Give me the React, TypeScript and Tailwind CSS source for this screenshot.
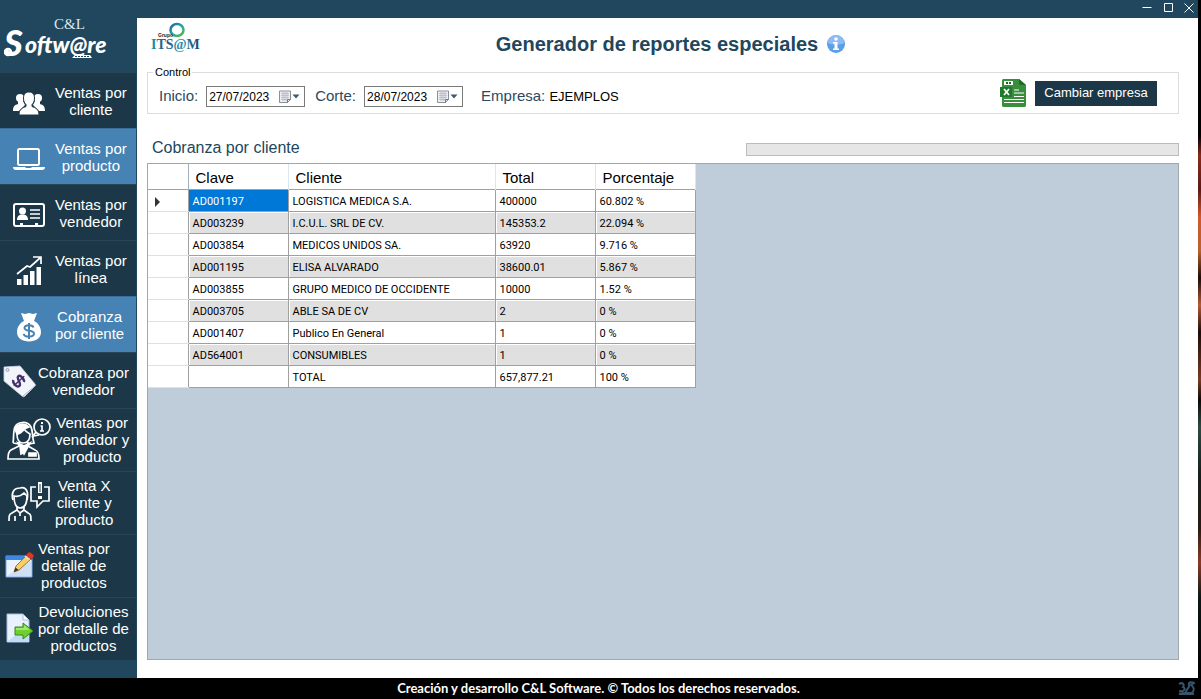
import type { ReactNode } from 'react'

// ---------- sidebar icons ----------

function UsersIcon() {
  return (
    <svg width="32" height="26" viewBox="0 0 32 26" fill="white" aria-hidden="true">
      <circle cx="7" cy="8" r="4" />
      <circle cx="25" cy="8" r="4" />
      <path d="M0 21c0-5 2-6 5-7v-3h5l2 4-6 6zM32 21c0-5-2-6-5-7v-3h-5l-2 4 6 6z" />
      <path
        d="M16 2c3.500 0 5.500 2.500 5.500 6s-1 5-2.500 6.500v2c3.500 1.500 7 2.500 7 8.500H6c0-6 3.500-7 7-8.500v-2C11.500 13 10.500 11.500 10.500 8S12.500 2 16 2z"
        stroke="#1c3848"
        strokeWidth="1"
      />
    </svg>
  )
}

function LaptopIcon() {
  return (
    <svg width="32" height="24" viewBox="0 0 32 24" fill="none" aria-hidden="true">
      <rect x="5" y="2" width="21" height="16" rx="1.500" stroke="white" strokeWidth="2" />
      <path d="M0 20h12l1 1h5l1-1h13c0 2-1 3-3 3H3c-2 0-3-1-3-3z" fill="white" />
    </svg>
  )
}

function IdCardIcon() {
  return (
    <svg width="32" height="26" viewBox="0 0 32 26" fill="none" aria-hidden="true">
      <rect x="1" y="2" width="30" height="22" rx="2" stroke="white" strokeWidth="2" />
      <circle cx="9.500" cy="9" r="3.500" fill="white" />
      <path d="M4 18c0-4 2-5 4-5.500h3c2 .5 4 1.500 4 5.500z" fill="white" />
      <path d="M17 8h10M17 12h10M17 16h10" stroke="white" strokeWidth="1.500" />
      <path d="M7 24v-3h3v3M22 24v-3h3v3" fill="white" />
    </svg>
  )
}

function GrowthIcon() {
  return (
    <svg width="26" height="30" viewBox="0 0 26 30" fill="none" aria-hidden="true">
      <path d="M1 23h4.500v6H1zM7.500 19H12v10H7.500zM14 15h4.500v14H14zM20.500 11H25v18h-4.500z" fill="white" />
      <path d="M1 18L11 10l3 1L24 2M17 1h8v7" stroke="white" strokeWidth="1.700" />
    </svg>
  )
}

function MoneyBagIcon() {
  return (
    <svg width="26" height="30" viewBox="0 0 26 30" fill="white" aria-hidden="true">
      <path d="M5 1l4 1 4-1 4 1 4-1-3 8C22 11 25 15 25 20c0 6-5 9.500-12 9.500S1 26 1 20C1 15 4 11 8 9z" />
      <path
        d="M17.500 15.500c-.5-1.500-2-2.200-4.500-2.200-3 0-4.500 1.200-4.500 2.800 0 4 9.500 1.500 9.500 5.500 0 1.800-2 3-5 3s-5-1-5.300-2.800M13 11v16"
        fill="none"
        stroke="#4682b4"
        strokeWidth="2"
      />
    </svg>
  )
}

function PriceTagIcon() {
  return (
    <svg width="34" height="34" viewBox="0 0 34 34" fill="none" aria-hidden="true">
      <path d="M1 3l16-1 15 18c1 1 0 2-1 3l-9 9c-1 1-2 1-3 0L1 17z" fill="#f4f5fb" stroke="#ccd3e6" strokeWidth=".8" />
      <path d="M20 32l12-10" stroke="#aab4d0" />
      <circle cx="4.500" cy="6" r="1.500" fill="#e2e6f0" stroke="#9aa3ba" />
      <g transform="rotate(48 16 17)" stroke="#43306d">
        <path d="M20 14c-1-2-8-2.500-8 .5S20 16.500 20 20s-7.500 3-8.500.5" strokeWidth="2.400" />
        <path d="M16 10v14" strokeWidth="1.500" />
      </g>
    </svg>
  )
}

function AdvisorIcon() {
  return (
    <svg width="44" height="44" viewBox="0 0 44 44" fill="none" stroke="white" strokeWidth="1.700" aria-hidden="true">
      <circle cx="35" cy="10" r="8" />
      <path d="M29 15l-3 4 6-1" />
      <path d="M33.500 9H35v5M33 14h4" />
      <path d="M35 5v2" strokeWidth="2" />
      <path d="M6 26c1-5 0-12 2-16C10 5 20 3 24 10c2 4 1 10 3 16l-5 1M6 26l6 1" />
      <path d="M10 17c2 0 6-2 7-5 2 3 4 4 6 5 0 6-3 9-7 9s-6-4-6-9zM12 25v4l-8 4c-2 1-3 3-3 9h31c0-6-1-8-4-9l-7-4v-4" />
      <path d="M8 12c2-5 9-7 14-2l-5 2-7 5z" fill="white" />
      <path d="M11 26l6 11 6-11-6 3zM13 29l1 8 4-2" fill="white" />
      <path d="M22 36h7v3h-7z" fill="white" />
    </svg>
  )
}

function CustomerIcon() {
  return (
    <svg width="44" height="44" viewBox="0 0 44 44" fill="none" stroke="white" strokeWidth="1.700" aria-hidden="true">
      <path d="M6 20c-2-6 0-12 7-12 6-2 9 4 7 12" />
      <path d="M7 16c4 1 8-1 10-3l3 3c0 8-3 12-7 12s-6-5-6-12zM10 26v4l-5 3c-3 1-3 3-3 8M17 26v4l4 3c3 1 3 3 3 8" />
      <path d="M10 30l3 3 4-3M13 33v3M8 36v5M18 36v5" />
      <path d="M29 7h-5v14h6v6l6-6h6V7h-5" />
      <path d="M33 2v11M33 16v3" strokeWidth="4" />
      <path d="M33 4v8" stroke="#1c3848" strokeWidth="1" />
    </svg>
  )
}

function EditWindowIcon() {
  return (
    <svg width="30" height="30" viewBox="0 0 30 30" fill="none" aria-hidden="true">
      <path d="M1 6h26v21H1z" fill="#e9f2fd" stroke="#77a7e6" />
      <path d="M1 6h26v4H1z" fill="#3f87e4" />
      <path d="M3 25L26 11v15H3z" fill="#cfe0f6" />
      <path d="M9 22l2-6L22 5l4 4-12 11z" fill="#f8cf63" stroke="#a7712b" />
      <path d="M9 22l1.500-4.500 3 2.500z" fill="#333" />
      <path d="M21 5l2-2c1-1 2-1 3 0l2 1.500c1 1 1 2 0 3L26 9z" fill="#d93a30" stroke="#a32720" strokeWidth=".7" />
      <path d="M20 6l4 4" stroke="#ddd" strokeWidth="1.500" />
    </svg>
  )
}

function ExportIcon() {
  return (
    <svg width="30" height="32" viewBox="0 0 30 32" fill="none" aria-hidden="true">
      <path d="M2 2h16l6 6v22H2z" fill="#e8f1fc" stroke="#a3bfe3" />
      <path d="M2 30L24 12v18z" fill="#c4dbf6" />
      <path d="M18 2v6h6z" fill="#fff" stroke="#a3bfe3" />
      <path d="M10 15h8v-4l10 8-10 8v-4h-8z" fill="#6ed02f" stroke="#358a17" />
      <path d="M11 16h8v-3l6 5H11z" fill="#a4e66d" />
    </svg>
  )
}

// ---------- header artwork ----------

function SoftwareLogo() {
  return (
    <svg width="110" height="56" viewBox="0 0 110 56" role="img" aria-label="C&L Software">
      <text x="50" y="19" fill="#dbe6ee" fontFamily="Liberation Serif, serif" fontSize="15">
        C&amp;L
      </text>
      <text x="0" y="46" fill="white" fontFamily="Lato, sans-serif" fontSize="36" fontWeight="900" fontStyle="italic">
        S
      </text>
      <text x="21" y="43" fill="white" fontFamily="Lato, sans-serif" fontSize="23" fontWeight="900" fontStyle="italic">
        oftw@re
      </text>
      <circle cx="4" cy="42" r="3" fill="none" stroke="white" strokeWidth="2.500" />
      <path d="M71 45h15l2 3H68z" fill="white" />
      <path d="M71 46.500h15" stroke="#21475e" strokeDasharray="2 1" />
    </svg>
  )
}

function ItsamLogo() {
  return (
    <svg width="52" height="30" viewBox="0 0 52 30" role="img" aria-label="Grupo ITS@M">
      <defs>
        <linearGradient id="ring" x1="0" y1="0" x2="1" y2="1">
          <stop offset="0" stopColor="#1b63a5" />
          <stop offset=".5" stopColor="#25a9a0" />
          <stop offset="1" stopColor="#59b947" />
        </linearGradient>
        <linearGradient id="letters" x1="0" y1="0" x2="1" y2="0">
          <stop offset="0" stopColor="#149ca0" />
          <stop offset=".3" stopColor="#23517f" />
          <stop offset=".6" stopColor="#2393ad" />
          <stop offset="1" stopColor="#1d4668" />
        </linearGradient>
      </defs>
      <ellipse cx="26" cy="8" rx="6.500" ry="6" fill="none" stroke="url(#ring)" strokeWidth="2.500" />
      <text x="7" y="15" fill="#222" fontFamily="Liberation Sans, sans-serif" fontSize="5" fontWeight="700">
        Grupo
      </text>
      <text x="0" y="27" fill="url(#letters)" fontFamily="Liberation Serif, serif" fontSize="14" fontWeight="700">
        ITS@M
      </text>
    </svg>
  )
}

function InfoIcon() {
  return (
    <svg width="20" height="20" viewBox="0 0 20 20" aria-hidden="true">
      <circle cx="10" cy="10" r="9" fill="#5c9fe8" />
      <path d="M2 9a8 8 0 0 1 16 0c-4 2-12 2-16 0z" fill="#8cbdf2" />
      <circle cx="10" cy="5" r="1.800" fill="white" />
      <path d="M7 8h4.500v6.500H13V16H7v-1.500h1.500v-5H7z" fill="white" />
    </svg>
  )
}

function ExcelIcon() {
  return (
    <svg width="28" height="30" viewBox="0 0 28 30" fill="none" aria-hidden="true">
      <path d="M4 1h15l7 6v20c0 1.500-.5 2-2 2H4c-1.500 0-2-.5-2-2V3c0-1.500.5-2 2-2z" fill="#388e3c" />
      <path d="M19 1l7 6h-5c-1.500 0-2-.5-2-2z" fill="#1f6b27" />
      <path d="M4 3h9v4H4z" fill="white" />
      <path d="M6 5h2M9 5h2" stroke="#1f6b27" strokeWidth="2" />
      <path d="M0 9h12v10H0z" fill="#1f7a2c" />
      <path d="M4 11l5 6M9 11l-5 6" stroke="white" strokeWidth="1.700" />
      <path d="M14 12h5M14 15h10M14 18.500h10M4 21.500h20M4 24.500h20" stroke="white" strokeWidth="1.200" />
    </svg>
  )
}

function CalendarIcon() {
  return (
    <svg width="22" height="14" viewBox="0 0 22 14" fill="none" aria-hidden="true">
      <path d="M.5 1h11v8.500l-3 3H.5z" fill="#eceef2" stroke="#8b8f98" />
      <path d="M2 3.500h8M2 5.500h8M2 7.500h8M2 9.500h6M4 2v9M6 2v9M8 2v9" stroke="#b6bac4" strokeWidth=".8" />
      <path d="M8.500 12.500v-3h3" stroke="#777" />
      <path d="M13.500 4.500h7L17 8.500z" fill="#3b5a73" />
    </svg>
  )
}

// ---------- data ----------

type MenuItem = {
  lines: string[]
  icon: ReactNode
  active?: boolean
  compact?: boolean
}

const menu: MenuItem[] = [
  { lines: ['Ventas por', 'cliente'], icon: <UsersIcon /> },
  { lines: ['Ventas por', 'producto'], icon: <LaptopIcon />, active: true },
  { lines: ['Ventas por', 'vendedor'], icon: <IdCardIcon /> },
  { lines: ['Ventas por', 'línea'], icon: <GrowthIcon /> },
  { lines: ['Cobranza', 'por cliente'], icon: <MoneyBagIcon />, active: true },
  { lines: ['Cobranza por', 'vendedor'], icon: <PriceTagIcon />, compact: true },
  { lines: ['Ventas por', 'vendedor y', 'producto'], icon: <AdvisorIcon /> },
  { lines: ['Venta X', 'cliente y', 'producto'], icon: <CustomerIcon /> },
  { lines: ['Ventas por', 'detalle de', 'productos'], icon: <EditWindowIcon />, compact: true },
  { lines: ['Devoluciones', 'por detalle de', 'productos'], icon: <ExportIcon />, compact: true },
]

const rows = [
  ['AD001197', 'LOGISTICA MEDICA S.A.', '400000', '60.802 %'],
  ['AD003239', 'I.C.U.L. SRL DE CV.', '145353.2', '22.094 %'],
  ['AD003854', 'MEDICOS UNIDOS SA.', '63920', '9.716 %'],
  ['AD001195', 'ELISA ALVARADO', '38600.01', '5.867 %'],
  ['AD003855', 'GRUPO MEDICO DE OCCIDENTE', '10000', '1.52 %'],
  ['AD003705', 'ABLE SA DE CV', '2', '0 %'],
  ['AD001407', 'Publico En General', '1', '0 %'],
  ['AD564001', 'CONSUMIBLES', '1', '0 %'],
  ['', 'TOTAL', '657,877.21', '100 %'],
]

const columns = ['Clave', 'Cliente', 'Total', 'Porcentaje']

// ---------- pieces ----------

function Sidebar() {
  return (
    <aside className="w-[137px] shrink-0 bg-[#21475e]">
      <div className="h-[72px] pt-[10px] pl-1">
        <SoftwareLogo />
      </div>
      <nav>
        {menu.map((item) => (
          <button
            key={item.lines.join(' ')}
            type="button"
            className={`flex w-full items-center border-t border-r border-r-[#21475e] text-left text-[15px] leading-[17px] text-white ${
              item.lines.length > 2 ? 'h-[63px] pb-[2px]' : 'h-14'
            } ${item.active ? 'border-t-[#3a6f9d] bg-[#4682b4]' : 'border-t-[#264656] bg-[#1c3848]'}`}
          >
            <span
              className={`flex shrink-0 justify-center ${
                item.compact ? 'w-[38px] pl-[2px]' : item.lines.length > 2 ? 'w-[55px] pl-[2px]' : 'w-[55px] pt-1 pl-[2px]'
              }`}
            >
              {item.icon}
            </span>
            <span className="text-center whitespace-nowrap">
              {item.lines.map((line) => (
                <span key={line} className="block">
                  {line}
                </span>
              ))}
            </span>
          </button>
        ))}
      </nav>
    </aside>
  )
}

function DateField({ id, label, value }: { id: string; label: string; value: string }) {
  return (
    <div className="flex items-center gap-2">
      <label htmlFor={id} className="text-[15px] text-[#2b4a62]">
        {label}
      </label>
      <div className="flex h-[21px] w-[99px] items-center border border-[#7a7a7a] bg-white">
        <input id={id} type="text" defaultValue={value} className="w-[72px] pt-px pl-[2px] text-[12px] text-black outline-none" />
        <button type="button" aria-label={`Abrir calendario de ${label}`}>
          <CalendarIcon />
        </button>
      </div>
    </div>
  )
}

function ReportTable() {
  return (
    <table className="border-collapse bg-white text-left text-black">
      <thead>
        <tr className="h-[25px] border-b border-[#a0a0a0] text-[15px] leading-5">
          <th className="w-10 border-r border-[#a0b0c0]" aria-label="Fila" />
          {columns.map((column) => (
            <th
              key={column}
              className={`border-r border-[#dde6ee] p-0 pt-1 pl-[7px] font-normal ${column === 'Cliente' ? 'w-[207px]' : 'w-[100px]'}`}
            >
              {column}
            </th>
          ))}
        </tr>
      </thead>
      <tbody>
        {rows.map((row, idx) => (
          <tr key={idx} className="h-[22px] font-[Roboto,sans-serif] text-[11px]">
            <td className="border-r border-b border-r-[#a0a0a0] border-b-[#e0e0e0] p-0 pt-1 pl-[7px]">
              {idx === 0 && (
                <svg width="6" height="10" viewBox="0 0 6 10" aria-hidden="true">
                  <path d="M0 0l5 5-5 5z" fill="#333" />
                </svg>
              )}
            </td>
            {row.map((cell, col) => (
              <td
                key={col}
                className={`border-r border-b border-[#a0a0a0] p-0 pt-1 pl-1 ${
                  idx === 0 && col === 0
                    ? 'bg-[#0078d7] text-white'
                    : idx % 2 === 1
                      ? 'bg-[#e0e0e0] shadow-[inset_1px_1px_0_#ffffff]'
                      : ''
                }`}
              >
                {cell}
              </td>
            ))}
          </tr>
        ))}
      </tbody>
    </table>
  )
}

function WindowButtons() {
  return (
    <div className="flex h-[18px] items-start justify-end gap-[9px] bg-[#21475e] pr-[3px] text-white">
      <button type="button" aria-label="Minimizar">
        <svg width="12" height="16" viewBox="0 0 12 16" fill="none" stroke="currentColor">
          <path d="M1.500 7.500h9" />
        </svg>
      </button>
      <button type="button" aria-label="Maximizar">
        <svg width="12" height="16" viewBox="0 0 12 16" fill="none" stroke="currentColor">
          <path d="M2.500 3.500h8v8h-8z" />
        </svg>
      </button>
      <button type="button" aria-label="Cerrar">
        <svg width="12" height="16" viewBox="0 0 12 16" fill="none" stroke="currentColor">
          <path d="M1.500 3.500l9 9M10.500 3.500l-9 9" />
        </svg>
      </button>
    </div>
  )
}

export default function App() {
  return (
    <div className="flex min-h-screen flex-col bg-black font-['Liberation_Sans',Arial,sans-serif]">
      <div className="flex flex-1">
        <Sidebar />
        <div className="flex flex-1 flex-col">
          <WindowButtons />
          <main className="flex flex-1 flex-col bg-white pr-[19px] pb-[18px] pl-[10px]">
            <header className="flex h-12 items-start pt-1">
              <div className="flex-1 pl-1">
                <ItsamLogo />
              </div>
              <h1 className="flex items-center gap-2 pt-[7px] pl-3 text-[20px] leading-[30px] font-bold text-[#21475e]">
                Generador de reportes especiales
                <button type="button" aria-label="Información">
                  <InfoIcon />
                </button>
              </h1>
              <div className="flex-1" />
            </header>

            <fieldset className="h-12 border border-[#dcdcdc] pr-[21px] pl-[11px]">
              <legend className="-ml-[6px] px-[2px] text-[11px] leading-3 text-black">Control</legend>
              <div className="flex h-[30px] items-center">
                <div className="flex flex-1 items-center gap-[10px] pt-[7px]">
                  <DateField id="inicio" label="Inicio:" value="27/07/2023" />
                  <DateField id="corte" label="Corte:" value="28/07/2023" />
                  <p className="pl-2 text-[15px] text-[#2b4a62]">
                    Empresa: <span className="text-[13px] text-black">EJEMPLOS</span>
                  </p>
                </div>
                <button type="button" aria-label="Exportar a Excel" className="mr-[7px]">
                  <ExcelIcon />
                </button>
                <button type="button" className="h-[25px] w-[122px] bg-[#1c3848] text-[13px] text-white">
                  Cambiar empresa
                </button>
              </div>
            </fieldset>

            <div className="mt-[22px] flex items-center pb-[3px]">
              <h2 className="flex-1 pl-[5px] text-[16px] leading-6 text-[#21475e]">Cobranza por cliente</h2>
              <div
                role="progressbar"
                aria-label="Progreso"
                aria-valuenow={0}
                className="mt-[2px] h-[13px] w-[42%] border border-[#bcbcbc] bg-[#e6e6e6]"
              />
            </div>

            <section className="flex-1 border border-[#a0a8b0] bg-[#bfccda]">
              <ReportTable />
            </section>
          </main>
        </div>
        {/* franja del escritorio junto a la ventana */}
        <div className="w-[3px] shrink-0 bg-[linear-gradient(to_bottom,#000_20%,#8a2a1a_23%,#5a1a14_28%,#d0582c_32%,#b8622c_37%,#1a0c08_41%,#b35a34_45%,#1a0c08_49%,#7a3a22_56%,#0c0a08_59%,#2c4a42_63%,#14201c_70%,#2a1a12_78%,#8a3a26_83%,#0c1816_88%,#000_100%)]" />
      </div>

      <footer className="flex h-[21px] items-start bg-black pr-1 text-white">
        <p className="flex-1 pl-5 text-center font-[Lato,sans-serif] text-[13px] leading-5 font-bold">
          Creación y desarrollo C&amp;L Software. © Todos los derechos reservados.
        </p>
        <svg width="20" height="18" viewBox="0 0 20 18" fill="none" stroke="#35546d" strokeWidth="2" aria-hidden="true">
          <path d="M2 6c3-2 6 0 4 3 3 1 2 5-4 4M9 14c0-3 4-4 3-7-1-2 2-4 5-2l-3 2c3 2 4 5 1 8H7l-5 1h15" />
        </svg>
      </footer>
    </div>
  )
}
